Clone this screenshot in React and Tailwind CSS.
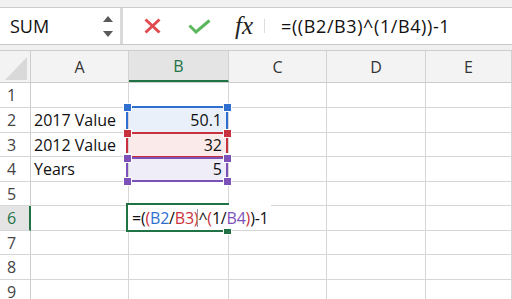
import React from "react";

const GRID = "border-[#d6d6d6]";
const COLS = [
  { w: "w-[98px]" },
  { w: "w-[100px]" },
  { w: "w-[98px]" },
  { w: "w-[99px]" },
  { w: "flex-1" },
];
const ROW_H = [
  "h-[25px]",
  "h-[25px]",
  "h-[24px]",
  "h-[25px]",
  "h-[24px]",
  "h-[25px]",
  "h-[24px]",
  "h-[25px]",
  "h-[25px]",
];

function Corner({ pos, color }) {
  return (
    <div
      className={`absolute w-[7px] h-[7px] outline outline-1 outline-white ${pos}`}
      style={{ backgroundColor: color }}
    />
  );
}

function RangeBox({ top, height, color }) {
  return (
    <div
      className="absolute left-[126px] w-[102px] border-2"
      style={{ top, height, borderColor: color }}
    >
      <Corner pos="left-[-4.5px] top-[-4.5px]" color={color} />
      <Corner pos="right-[-4.5px] top-[-4.5px]" color={color} />
      <Corner pos="left-[-4.5px] bottom-[-4.5px]" color={color} />
      <Corner pos="right-[-4.5px] bottom-[-4.5px]" color={color} />
    </div>
  );
}

export default function App() {
  const cells = {
    "1-0": { text: "2017 Value" },
    "2-0": { text: "2012 Value" },
    "3-0": { text: "Years" },
    "1-1": { text: "50.1", right: true, bg: "bg-[#e9f0fa]" },
    "2-1": { text: "32", right: true, bg: "bg-[#fbeaea]" },
    "3-1": { text: "5", right: true, bg: "bg-[#efedf8]" },
  };

  return (
    <div
      className="w-[512px] h-[299px] overflow-hidden bg-white relative text-[#222]"
      style={{ fontFamily: '"Open Sans", "Liberation Sans", sans-serif' }}
    >
      {/* top strip */}
      <div className="h-[8px] bg-[#f1f1f1] border-b border-[#cdcdcd]" />

      {/* formula bar */}
      <div className="flex h-[37px] border-b border-[#c8c8c8] bg-white">
        <div className="w-[123px] flex items-center justify-between pl-[10px] pr-[7px] border-r-[3px] border-[#d9d9d9]">
          <span className="text-[18px] leading-none text-[#111]">SUM</span>
          <div className="flex flex-col items-center gap-[9px] mt-[1px]">
            <svg width="10" height="6" viewBox="0 0 10 6">
              <polygon points="5,0 10,6 0,6" fill="#5a5a5a" />
            </svg>
            <svg width="10" height="6" viewBox="0 0 10 6">
              <polygon points="0,0 10,0 5,6" fill="#5a5a5a" />
            </svg>
          </div>
        </div>
        <div className="flex-1 flex items-center">
          <svg width="17" height="16" viewBox="0 0 17 16" className="ml-[21px]">
            <path d="M1.5 1.5 L15.5 14.5 M15.5 1.5 L1.5 14.5" stroke="#e14a4f" strokeWidth="3" />
          </svg>
          <svg width="23" height="15" viewBox="0 0 23 15" className="ml-[27px]">
            <path d="M1.5 6.5 L8 13 L21.5 1.5" stroke="#5cb85c" strokeWidth="3" fill="none" />
          </svg>
          <span
            className="ml-[24px] text-[25px] italic leading-none text-[#222] -mt-[2px]"
            style={{ fontFamily: '"Liberation Serif", serif' }}
          >
            fx
          </span>
          <div className="ml-[11px] w-px h-[14px] bg-[#dddddd]" />
          <span className="ml-[16px] text-[18px] leading-none tracking-[0.6px] text-[#111]">
            =((B2/B3)^(1/B4))-1
          </span>
        </div>
      </div>

      {/* gap strip */}
      <div className="h-[6px] bg-[#f0f0f0] border-b border-[#cdcdcd]" />

      {/* column headers */}
      <div className="flex h-[32px] bg-[#f3f3f3] border-b border-[#cdcdcd] text-[16px] text-[#333]">
        <div className="w-[31px] border-r border-[#cdcdcd] relative">
          <svg width="22" height="23" viewBox="0 0 22 23" className="absolute left-[5px] top-[6px]">
            <polygon points="22,0 22,23 0,23" fill="#d9d9d9" />
          </svg>
        </div>
        {["A", "B", "C", "D", "E"].map((c, i) => (
          <div
            key={c}
            className={`${COLS[i].w} flex items-center justify-center border-r border-[#d2d2d2] ${
              c === "B" ? "bg-[#e4e4e4] text-[#217346] border-b-2 border-b-[#217346]" : ""
            }`}
          >
            {c}
          </div>
        ))}
      </div>

      {/* body */}
      <div className="relative">
        {ROW_H.map((h, r) => (
          <div key={r} className={`flex ${h}`}>
            <div
              className={`w-[31px] flex items-center pl-[7px] text-[16px] border-b ${GRID} ${
                r === 5
                  ? "text-[#217346] bg-[#e4e4e4] border-r-2 border-r-[#217346]"
                  : "text-[#444] border-r border-r-[#cdcdcd]"
              }`}
            >
              {r + 1}
            </div>
            {COLS.map((c, i) => {
              const cell = cells[`${r}-${i}`];
              return (
                <div
                  key={i}
                  className={`${c.w} ${cell?.bg || ""} flex items-center border-r border-b ${GRID} text-[16px] text-[#111] ${
                    cell?.right ? "justify-end pr-[6px]" : "pl-[3px]"
                  }`}
                >
                  {cell?.text}
                </div>
              );
            })}
          </div>
        ))}

        {/* formula reference ranges */}
        <RangeBox top="23px" height="28px" color="#2f6fcf" />
        <RangeBox top="49px" height="26px" color="#c8323e" />
        <RangeBox top="74px" height="25px" color="#7c52b8" />

        {/* active editing cell */}
        <div className="absolute left-[126px] top-[120px] w-[103px] h-[29px] border-2 border-r-0 border-[#217346] bg-white overflow-visible">
          <div className="h-full flex items-center pl-[4px] pr-[2px] bg-white whitespace-nowrap text-[16px] tracking-[-0.2px] text-[#111] w-max">
            <span>=(</span>
            <span className="text-[#c8323e]">(</span>
            <span className="text-[#2f6fcf]">B2</span>
            <span>/</span>
            <span className="text-[#c8323e]">B3</span>
            <span className="text-[#c8323e]">)</span>
            <span className="inline-block w-px h-[18px] bg-[#999] -ml-[1px]" />
            <span>^</span>
            <span className="text-[#c8323e]">(</span>
            <span>1</span>
            <span>/</span>
            <span className="text-[#7c52b8]">B4</span>
            <span className="text-[#c8323e]">)</span>
            <span>)-1</span>
          </div>
        </div>
        {/* fill handle */}
        <div className="absolute left-[224px] top-[146px] w-[7px] h-[5px] bg-[#217346] outline outline-1 outline-white" />
      </div>
    </div>
  );
}
